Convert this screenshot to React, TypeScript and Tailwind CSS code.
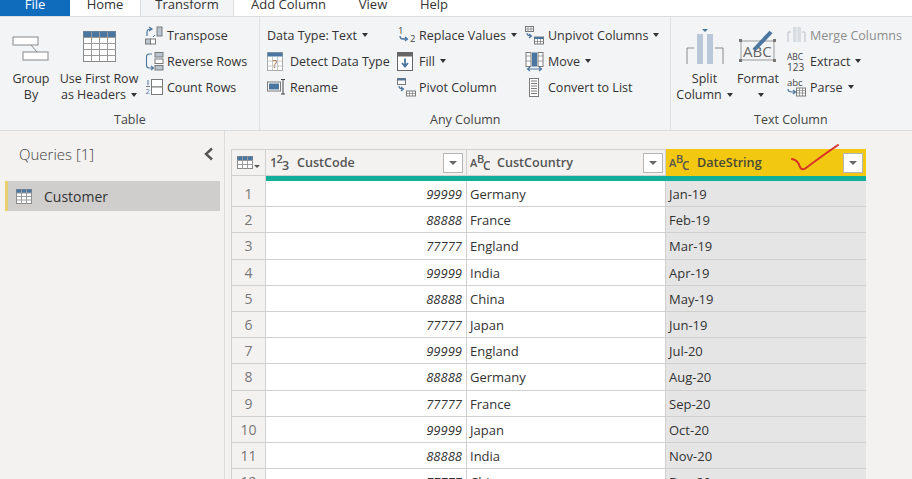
import React from "react";

const Caret = () => <span className="inline-block ml-[5px] align-middle w-0 h-0 border-x-[3.5px] border-x-transparent border-t-[4px] border-t-[#333] relative top-[-1px]" />;

const S = ({ w = 20, h = 20, children }: { w?: number; h?: number; children: React.ReactNode }) => (
  <svg width={w} height={h} viewBox={`0 0 ${w} ${h}`} className="shrink-0 block">{children}</svg>
);

const G = "#7a7a7a", B = "#4a76a0", L = "#b9c4d0";

const icons: Record<string, React.ReactNode> = {
  transpose: <S w={20} h={20}><rect x="12" y="1" width="5" height="9" fill={L} stroke={G} /><rect x="0.5" y="13" width="5" height="5" fill={L} stroke={G} /><rect x="5.5" y="13" width="5" height="5" fill="#fff" stroke={G} /><path d="M2 10 V6 Q2 3 6 3 M4 1 L7 3 L4 5" fill="none" stroke={B} strokeWidth="1.2" /><path d="M10 9 L8 11" stroke={B} /></S>,
  reverse: <S w={20} h={20}><rect x="10" y="0.5" width="8" height="4.5" fill={L} stroke={G} /><rect x="10" y="7" width="8" height="4.5" fill="#fff" stroke={G} /><rect x="10" y="13.5" width="8" height="4.5" fill={L} stroke={G} /><path d="M7 2 H4 Q1.5 2 1.5 5 V13 Q1.5 16 4 16 H8 M6 14 L8.5 16 L6 18" fill="none" stroke={B} strokeWidth="1.1" /></S>,
  count: <S w={20} h={20}><rect x="6.5" y="1.5" width="11" height="7.5" fill="#fff" stroke={G} /><rect x="6.5" y="9" width="11" height="7.5" fill="#fff" stroke={G} /><path d="M1 8.5 H5" stroke={G} /><path d="M3 2 V7" stroke="#4a76a0" /><text x="0.5" y="16" fontSize="7.5" fill="#4a76a0" fontFamily="Open Sans">2</text></S>,
  detect: <S w={20} h={20}><rect x="0.5" y="0.5" width="15" height="18" fill="#fff" stroke="#a9a9a9" /><rect x="0.5" y="0.5" width="15" height="4" fill={B} /><path d="M0.5 9 H15 M0.5 14 H15 M5.5 5 V18 M10.5 5 V18" stroke="#c8c8c8" /><text x="5.5" y="16" fontSize="11" fill="#a06a40" fontFamily="Open Sans">?</text></S>,
  rename: <S w={20} h={20}><rect x="0.5" y="4" width="13" height="9" fill="#fff" stroke={G} /><rect x="2" y="5.5" width="10" height="6" fill={B} /><path d="M14 1.5 H18 M16 1.5 V16 M14 16 H18" stroke="#444" strokeWidth="1" fill="none" /></S>,
  replace: <S w={20} h={20}><text x="1" y="8" fontSize="9.5" fill="#444" fontFamily="Open Sans">1</text><text x="13" y="16" fontSize="9.5" fill="#444" fontFamily="Open Sans">2</text><path d="M3 10 Q3 13 6 13 H10 M8 11 L10.5 13 L8 15" fill="none" stroke={B} strokeWidth="1.3" /></S>,
  fill: <S w={20} h={20}><rect x="0.5" y="0.5" width="15" height="18" fill="#fff" stroke="#666" /><rect x="0.5" y="0.5" width="15" height="4" fill="#666" /><path d="M8 6.5 V14 M5 11 L8 14.5 L11 11" fill="none" stroke={B} strokeWidth="1.8" /></S>,
  pivot: <S w={20} h={20}><rect x="0.5" y="0.5" width="8" height="6" fill="#fff" stroke={G} /><rect x="0.5" y="0.5" width="8" height="2" fill={B} /><path d="M2 8 Q2 11 6 11 M4 9 L6.5 11 L4 13" fill="none" stroke={B} strokeWidth="1.2" /><rect x="9.5" y="13" width="9" height="5" fill="#fff" stroke={G} /><path d="M9.5 15.5 H18.5 M12.5 13 V18 M15.5 13 V18" stroke={G} strokeWidth=".7" /></S>,
  unpivot: <S w={20} h={20}><rect x="0.5" y="0.5" width="8" height="5" fill="#fff" stroke={G} /><path d="M0.5 3 H8.5 M3 .5 V5 M6 .5 V5" stroke={G} strokeWidth=".7" /><path d="M2 7 Q2 10 6 10 M4 8 L6.5 10 L4 12" fill="none" stroke={B} strokeWidth="1.2" /><rect x="9.5" y="11" width="9" height="7" fill="#fff" stroke={G} /><rect x="9.5" y="11" width="9" height="2" fill={B} /><path d="M9.5 15.5 H18.5 M12.5 13 V18 M15.5 13 V18" stroke={G} strokeWidth=".7" /></S>,
  move: <S w={20} h={20}><rect x="1" y="0.5" width="5" height="14" fill="#fff" stroke={G} /><rect x="7" y="0.5" width="5" height="14" fill={B} /><rect x="13" y="0.5" width="5" height="14" fill="#fff" stroke={G} /><path d="M1 4 H6 M1 9 H6 M13 4 H18 M13 9 H18" stroke={G} strokeWidth=".7" /><path d="M3 17 H16 M5 15 L2.5 17 L5 19 M14 15 L16.5 17 L14 19" fill="none" stroke={B} strokeWidth="1.2" /></S>,
  list: <S w={20} h={20}><rect x="4.5" y="0.5" width="9" height="18" fill="#fff" stroke={G} /><path d="M6 3 H12 M6 5.5 H12 M6 8 H12 M6 10.5 H12 M6 13 H12 M6 15.5 H12" stroke={G} /></S>,
  merge: <S w={20} h={20}><path d="M1 16 V6 H4 M18 16 V6 H15" fill="none" stroke="#b8c0c8" /><rect x="6" y="1" width="8" height="15" fill="#d8dde2" /><path d="M10 1 V16" stroke="#eef0f2" /></S>,
  extract: <S w={20} h={24}><text x="0" y="10" fontSize="8.5" fill="#444" fontFamily="Open Sans">ABC</text><text x="0" y="21" fontSize="10" fill="#444" fontFamily="Open Sans">123</text></S>,
  parse: <S w={20} h={20}><text x="0" y="8" fontSize="9.5" fill="#444" fontFamily="Open Sans">abc</text><path d="M1 11 Q1 14 5 14 H8 M6 12 L8.5 14 L6 16" fill="none" stroke={B} strokeWidth="1.2" /><rect x="9.5" y="10" width="9" height="8" fill="#fff" stroke={G} /><path d="M9.5 12.5 H18.5 M9.5 15 H18.5 M12.5 10 V18 M15.5 10 V18" stroke={G} strokeWidth=".7" /></S>,
};

function Small({ icon, label, caret, iconW = 22, dim }: { icon?: string; label: string; caret?: boolean; iconW?: number; dim?: boolean }) {
  return (
    <div className={`h-[26px] flex items-center whitespace-nowrap ${dim ? "text-[#8d8d8d]" : ""}`}>
      {icon && <span className="flex items-center justify-start" style={{ width: iconW }}>{icons[icon]}</span>}
      {label}
      {caret && <Caret />}
    </div>
  );
}

function Group({ width, label, labelPl, children, last }: { width: number; label: string; labelPl: number; children: React.ReactNode; last?: boolean }) {
  return (
    <div style={{ width }} className={`shrink-0 flex flex-col ${last ? "" : "border-r border-[#e1e1e1]"}`}>
      <div className="flex h-[87px] pt-[6px]">{children}</div>
      <div className="h-[20px] mt-[6px] leading-[20px] text-[#444]" style={{ paddingLeft: labelPl }}>{label}</div>
    </div>
  );
}

function Big({ width, icon, lines, ml = 0 }: { width: number; icon: React.ReactNode; lines: React.ReactNode[]; ml?: number }) {
  return (
    <div style={{ width, marginLeft: ml }} className="shrink-0 flex flex-col items-center leading-[16px]">
      <div className="h-[48px] pb-[1px] flex items-center justify-center">{icon}</div>
      {lines.map((l, i) => <div key={i} className="h-[16px] whitespace-nowrap">{l}</div>)}
    </div>
  );
}

const TableGlyph = ({ w, h, cols, rows, head }: { w: number; h: number; cols: number; rows: number; head: string }) => {
  const cw = (w - 1) / cols, rh = (h - 1) / rows;
  return (
    <svg width={w} height={h} viewBox={`0 0 ${w} ${h}`} className="block">
      <rect x=".5" y=".5" width={w - 1} height={h - 1} fill="#fff" stroke="#8a8a8a" />
      <rect x=".5" y=".5" width={w - 1} height={rh} fill={head} />
      {Array.from({ length: cols - 1 }, (_, i) => <path key={i} d={`M${.5 + cw * (i + 1)} .5 V${h}`} stroke="#9a9a9a" />)}
      {Array.from({ length: rows - 1 }, (_, i) => <path key={i} d={`M.5 ${.5 + rh * (i + 1)} H${w}`} stroke="#9a9a9a" />)}
    </svg>
  );
};

const typeText = (
  <svg width="20" height="18" viewBox="0 0 20 18" className="block shrink-0">
    <text x="0" y="13" fontSize="11" fill="#555" fontFamily="Open Sans">A</text>
    <text x="7" y="8.5" fontSize="11" fill="#555" fontFamily="Open Sans">B</text>
    <text x="13" y="16" fontSize="12" fill="#555" fontFamily="Open Sans">C</text>
  </svg>
);
const typeNum = (
  <svg width="20" height="18" viewBox="0 0 20 18" className="block shrink-0">
    <text x="0" y="13" fontSize="12.5" fill="#555" fontFamily="Open Sans">1</text>
    <text x="6.5" y="8.5" fontSize="11" fill="#555" fontFamily="Open Sans">2</text>
    <text x="12" y="16" fontSize="12.5" fill="#555" fontFamily="Open Sans">3</text>
  </svg>
);

const FilterBtn = () => (
  <div className="ml-auto w-[20px] h-[20px] bg-white border border-[#b5b5b5] flex items-center justify-center">
    <span className="w-0 h-0 border-x-[4px] border-x-transparent border-t-[4px] border-t-[#666]" />
  </div>
);

const rows: [string, string, string][] = [
  ["99999", "Germany", "Jan-19"], ["88888", "France", "Feb-19"], ["77777", "England", "Mar-19"],
  ["99999", "India", "Apr-19"], ["88888", "China", "May-19"], ["77777", "Japan", "Jun-19"],
  ["99999", "England", "Jul-20"], ["88888", "Germany", "Aug-20"], ["77777", "France", "Sep-20"],
  ["99999", "Japan", "Oct-20"], ["88888", "India", "Nov-20"], ["77777", "China", "Dec-20"],
];

export default function App() {
  return (
    <div className="w-[912px] h-[479px] overflow-hidden bg-[#f3f2f1] text-[12.5px] text-[#333] flex flex-col" style={{ fontFamily: '"Open Sans", sans-serif' }}>
      {/* tabs */}
      <div className="h-[17px] shrink-0 bg-white flex items-end overflow-hidden border-b border-[#dcdcdc] relative">
        <div className="flex h-[28px] shrink-0 text-[13px] leading-[28px] translate-y-[2px]">
          <div className="w-[70px] bg-[#0f6cbd] text-white text-center">File</div>
          <div className="w-[70px] text-center">Home</div>
          <div className="w-[94px] text-center bg-[#f3f4f6] border-x border-[#dcdcdc]">Transform</div>
          <div className="w-[109px] text-center">Add Column</div>
          <div className="w-[60px] text-center">View</div>
          <div className="w-[62px] text-center">Help</div>
        </div>
      </div>

      {/* ribbon */}
      <div className="h-[114px] shrink-0 bg-[#f3f4f6] border-b border-[#dcdcdc] flex">
        <Group width={260} label="Table" labelPl={114}>
          <Big width={62} lines={["Group", "By"]} icon={
            <svg width="38" height="30" viewBox="0 0 38 30" className="block"><rect x="1" y="5" width="25" height="8" fill="#fff" stroke="#888" /><rect x="11" y="20" width="25" height="8" fill="#fff" stroke="#888" /><path d="M19 13 L25 20" stroke="#888" /></svg>
          } />
          <Big width={74} lines={["Use First Row", <>as Headers<Caret /></>]} icon={
            <TableGlyph w={33} h={31} cols={4} rows={5} head="#4a76a0" />
          } />
          <div className="ml-[9px]">
            <Small icon="transpose" iconW={22} label="Transpose" />
            <Small icon="reverse" iconW={22} label="Reverse Rows" />
            <Small icon="count" iconW={22} label="Count Rows" />
          </div>
        </Group>

        <Group width={411} label="Any Column" labelPl={170}>
          <div className="ml-[7px] w-[130px]">
            <Small label="Data Type: Text" caret />
            <Small icon="detect" iconW={23} label="Detect Data Type" />
            <Small icon="rename" iconW={23} label="Rename" />
          </div>
          <div className="w-[128px]">
            <Small icon="replace" iconW={22} label="Replace Values" caret />
            <Small icon="fill" iconW={22} label="Fill" caret />
            <Small icon="pivot" iconW={22} label="Pivot Column" />
          </div>
          <div>
            <Small icon="unpivot" iconW={23} label="Unpivot Columns" caret />
            <Small icon="move" iconW={23} label="Move" caret />
            <Small icon="list" iconW={23} label="Convert to List" />
          </div>
        </Group>

        <Group width={241} label="Text Column" labelPl={83} last>
          <Big ml={1} width={65} lines={["Split", <>Column<Caret /></>]} icon={
            <svg width="38" height="38" viewBox="0 0 38 38" className="block"><path d="M1 36 V20 H8 M37 36 V20 H29" fill="none" stroke="#8a8a8a" /><rect x="11" y="6" width="6" height="30" fill="#b9c8d8" /><rect x="21" y="6" width="6" height="30" fill="#b9c8d8" /><path d="M16 1 H22 L19 4 Z" fill={B} /></svg>
          } />
          <Big width={42} lines={["Format", <Caret key="c" />]} icon={
            <svg width="38" height="36" viewBox="0 0 38 36" className="block"><rect x="2" y="12" width="33" height="19" fill="none" stroke="#999" /><rect x="0" y="10" width="3" height="3" fill="#777" /><rect x="34" y="10" width="3" height="3" fill="#777" /><rect x="0" y="30" width="3" height="3" fill="#777" /><rect x="34" y="30" width="3" height="3" fill="#777" /><text x="4" y="28" fontSize="15" fill="#666" fontFamily="Open Sans">ABC</text><path d="M15 21 L32 3" stroke={B} strokeWidth="4" /></svg>
          } />
          <div className="ml-[8px]">
            <Small icon="merge" iconW={23} label="Merge Columns" dim />
            <Small icon="extract" iconW={23} label="Extract" caret />
            <Small icon="parse" iconW={23} label="Parse" caret />
          </div>
        </Group>
      </div>

      {/* body */}
      <div className="flex-1 flex min-h-0">
        <div className="w-[225px] shrink-0 border-r border-[#dcdcdc]">
          <div className="h-[46px] mb-[4px] flex items-center justify-between pl-[19px] pr-[10px] text-[15px] font-light text-[#444]">
            <span>Queries [1]</span>
            <svg width="11" height="14" viewBox="0 0 11 14" className="block"><path d="M9 1.5 L3 7 L9 12.5" fill="none" stroke="#555" strokeWidth="2.4" /></svg>
          </div>
          <div className="ml-[5px] mr-[4px] h-[30px] bg-[#cfcecd] border-l-[3px] border-[#e8cf72] flex items-center pl-[8px] gap-[12px] text-[14px] text-[#333]">
            <TableGlyph w={16} h={15} cols={3} rows={4} head="#4a76a0" />
            Customer
          </div>
        </div>

        <div className="flex-1 pl-[6px] pt-[18px] min-w-0">
          <div className="relative w-[635px]">
            {/* header */}
            <div className="flex h-[27px] text-[12.6px] font-semibold text-[#555]">
              <div className="w-[35px] shrink-0 border border-[#d2d0ce] bg-[#f3f2f1] flex items-center pl-[5px]">
                <TableGlyph w={16} h={13} cols={3} rows={3} head="#4a76a0" />
                <span className="w-0 h-0 ml-[1px] mt-[7px] border-x-[3px] border-x-transparent border-t-[3px] border-t-[#555]" />
              </div>
              <div className="w-[201px] shrink-0 border-y border-r border-[#d2d0ce] flex items-center pl-[4px] pr-[3px]">
                {typeNum}<span className="ml-[7px] mt-[1px]">CustCode</span><FilterBtn />
              </div>
              <div className="w-[199px] shrink-0 border-y border-r border-[#d2d0ce] flex items-center pl-[3px] pr-[2px]">
                {typeText}<span className="ml-[7px] mt-[1px]">CustCountry</span><FilterBtn />
              </div>
              <div className="w-[200px] shrink-0 bg-[#f2c811] flex items-center pl-[3px] pr-[3px] text-[#4a4a3a]">
                {typeText}<span className="ml-[8px] mt-[1px]">DateString</span><FilterBtn />
              </div>
            </div>
            {/* teal */}
            <div className="flex h-[5px]">
              <div className="w-[35px] border-x border-[#d2d0ce]" />
              <div className="flex-1 bg-[#12ae9c]" />
            </div>
            {/* rows */}
            {rows.map((r, i) => (
              <div key={i} className="flex h-[26.2px] text-[13px] leading-[26px]">
                <div className="w-[35px] shrink-0 border-x border-b border-[#d2d0ce] text-center text-[14px] text-[#777]">{i + 1}</div>
                <div className="w-[201px] shrink-0 bg-white border-r border-b border-[#d2d0ce] text-right pr-[4px] italic">{r[0]}</div>
                <div className="w-[199px] shrink-0 bg-white border-r border-b border-[#d2d0ce] pl-[3px]">{r[1]}</div>
                <div className="w-[200px] shrink-0 bg-[#e5e5e5] border-b border-[#d2d0ce] pl-[3px]">{r[2]}</div>
              </div>
            ))}
            {/* hand-drawn check */}
            <svg width="60" height="40" viewBox="0 0 60 40" className="absolute left-[560px] top-[-9px]">
              <path d="M1 19 Q7 20 9 27 Q11 31 15 28 Q28 18 47 5" fill="none" stroke="#d8302a" strokeWidth="2" strokeLinecap="round" />
            </svg>
          </div>
        </div>
      </div>
    </div>
  );
}
